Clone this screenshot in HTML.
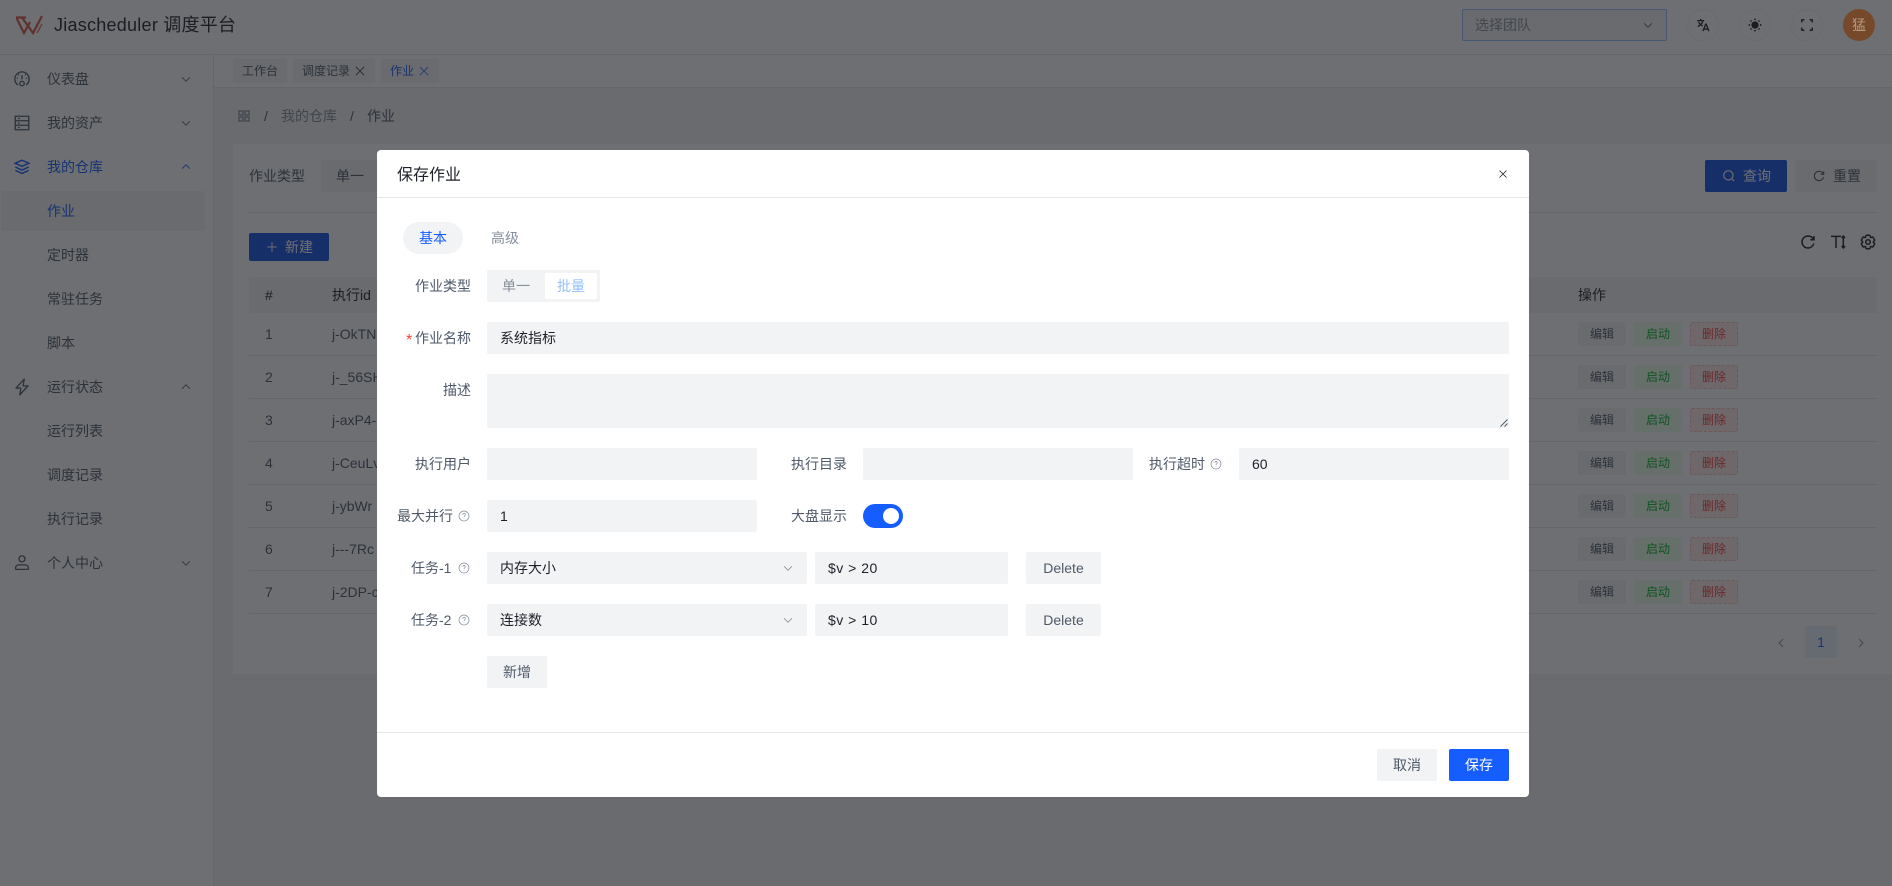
<!DOCTYPE html>
<html lang="zh"><head><meta charset="utf-8"><title>Jiascheduler</title>
<style>
*{box-sizing:border-box}
html,body{margin:0;padding:0;width:1892px;height:886px;overflow:hidden;background:#f2f3f5}
body{position:relative;font-family:"Liberation Sans","Noto Sans CJK SC",sans-serif;font-size:14px;color:#4e5969}
.a{position:absolute;white-space:nowrap}
.t{position:absolute;white-space:nowrap;line-height:20px;height:20px}
.f{position:absolute;background:#f2f3f5;border-radius:2px}
svg{position:absolute;fill:none;stroke:currentColor;stroke-width:4;overflow:visible}
.btn{position:absolute;text-align:center;border-radius:2px;white-space:nowrap}
.mi{position:absolute;left:47px;line-height:20px;height:20px;color:#4e5969}
.rl{position:absolute;left:249px;width:1628px;height:1px;background:#e5e6eb}
.lab{position:absolute;line-height:20px;height:20px;color:#4e5969;white-space:nowrap;text-align:right}
.val{position:absolute;line-height:20px;height:20px;color:#1d2129;white-space:nowrap}
.ed{background:#f2f3f5;font-size:12px;line-height:24px;width:48px;height:24px}
.st{background:#e8ffea;color:#00b42a;font-size:12px;line-height:24px;width:48px;height:24px}
.de{background:#ffece8;color:#f53f3f;font-size:12px;line-height:22px;width:48px;height:24px;border:1px dashed #f8c5bf}
</style></head><body>
<!-- header -->
<div class="a" style="left:0;top:0;width:1892px;height:55px;background:#fff;border-bottom:1px solid #e5e6eb"></div>
<svg style="left:16px;top:16px;width:27px;height:19px;color:#d9584a;stroke-width:2.2" viewBox="0 0 27 19"><path d="M0.5 2 8 17 14 6M0 1.500H10M6 1.500 17 17 26 0"/><path d="M21 17 26 8" stroke-width="1.2"/></svg>
<div class="a" style="left:54px;top:12px;font-size:18px;line-height:26px;color:#1d2129;letter-spacing:.25px">Jiascheduler 调度平台</div>
<div class="a" style="left:1462px;top:9px;width:205px;height:32px;background:#f2f3f5;border:1px solid #94bfff;border-radius:2px"></div>
<div class="t" style="left:1475px;top:15px;color:#86909c">选择团队</div>
<svg style="left:1642px;top:19px;width:12px;height:12px;color:#4e5969;stroke-width:3.5" viewBox="0 0 48 48"><path d="M39.6 17.443 24.043 33 8.487 17.443"/></svg>
<div class="a" style="left:1687px;top:9px;width:32px;height:32px;border-radius:50%;border:1px solid #f2f3f5"></div>
<div class="a" style="left:1739px;top:9px;width:32px;height:32px;border-radius:50%;border:1px solid #f2f3f5"></div>
<div class="a" style="left:1791px;top:9px;width:32px;height:32px;border-radius:50%;border:1px solid #f2f3f5"></div>
<svg style="left:1696px;top:18px;width:14px;height:14px;color:#1d2129;stroke-width:4.5" viewBox="0 0 48 48"><path d="M4 9h24M16 3v6M24 9c-2 9-8 16-18 20M9 13c2 6 7 11 14 14M24 45l9-24h2l9 24M27 38h14"/></svg>
<svg style="left:1747px;top:17px;width:16px;height:16px;color:#1d2129" viewBox="0 0 48 48"><circle cx="24" cy="24" r="9" fill="currentColor"/><path d="M24 5v4M24 39v4M5 24h4M39 24h4M10.6 10.6l2.8 2.8M34.6 34.6l2.8 2.8M10.6 37.4l2.8-2.8M34.6 13.4l2.8-2.8" stroke-width="5"/></svg>
<svg style="left:1800px;top:18px;width:14px;height:14px;color:#1d2129" viewBox="0 0 48 48"><path d="M42 15V7a1 1 0 0 0-1-1h-8M6 15V7a1 1 0 0 1 1-1h8m27 27v8a1 1 0 0 1-1 1h-8M6 33v8a1 1 0 0 0 1 1h8" stroke-width="5"/></svg>

<!-- sidebar -->
<div class="a" style="left:0;top:55px;width:214px;height:831px;background:#fff;border-right:1px solid #e5e6eb"></div>
<div class="f" style="left:1px;top:191px;width:204px;height:40px"></div>
<svg style="left:13px;top:70px;width:18px;height:18px;stroke-width:3.5" viewBox="0 0 48 48"><path d="M13 40C8 36.500 5 30.600 5 24 5 13.500 13.500 5 24 5s19 8.500 19 19c0 6.600-3 12.500-8 16M24 25V14M10 22h3M35 22h3M14 12l2 2M34 12l-2 2"/><circle cx="24" cy="36" r="6"/></svg>
<svg style="left:13px;top:114px;width:18px;height:18px;stroke-width:3.5" viewBox="0 0 48 48"><path d="M6 6h36v36H6zM6 18h36M6 30h36M13 12h5M13 24h5M13 36h5"/></svg>
<svg style="left:13px;top:158px;width:18px;height:18px;color:#165dff" viewBox="0 0 48 48"><path d="M24 6 42 14 24 22 6 14zM42 24 24 32 6 24M42 33 24 41 6 33"/></svg>
<svg style="left:13px;top:378px;width:18px;height:18px;stroke-width:3.5" viewBox="0 0 48 48"><path d="M30 3 8 27h13l-3 18 22-24H27z" stroke-linejoin="round"/></svg>
<svg style="left:13px;top:554px;width:18px;height:18px;stroke-width:3.5" viewBox="0 0 48 48"><circle cx="24" cy="13" r="8"/><path d="M7 37c0-5 4-8 9-8h16c5 0 9 3 9 8v3a1 1 0 0 1-1 1H8a1 1 0 0 1-1-1z"/></svg>
<div class="mi" style="top:69px">仪表盘</div>
<div class="mi" style="top:113px">我的资产</div>
<div class="mi" style="top:157px;color:#165dff">我的仓库</div>
<div class="mi" style="top:201px;color:#165dff">作业</div>
<div class="mi" style="top:245px">定时器</div>
<div class="mi" style="top:289px">常驻任务</div>
<div class="mi" style="top:333px">脚本</div>
<div class="mi" style="top:377px">运行状态</div>
<div class="mi" style="top:421px">运行列表</div>
<div class="mi" style="top:465px">调度记录</div>
<div class="mi" style="top:509px">执行记录</div>
<div class="mi" style="top:553px">个人中心</div>
<svg style="left:180px;top:73px;width:12px;height:12px;color:#4e5969;stroke-width:3.5" viewBox="0 0 48 48"><path d="M39.6 17.443 24.043 33 8.487 17.443"/></svg>
<svg style="left:180px;top:117px;width:12px;height:12px;color:#4e5969;stroke-width:3.5" viewBox="0 0 48 48"><path d="M39.6 17.443 24.043 33 8.487 17.443"/></svg>
<svg style="left:180px;top:161px;width:12px;height:12px;color:#165dff;stroke-width:3.5" viewBox="0 0 48 48"><path d="M39.6 30.557 24.043 15 8.487 30.557"/></svg>
<svg style="left:180px;top:381px;width:12px;height:12px;color:#4e5969;stroke-width:3.5" viewBox="0 0 48 48"><path d="M39.6 30.557 24.043 15 8.487 30.557"/></svg>
<svg style="left:180px;top:557px;width:12px;height:12px;color:#4e5969;stroke-width:3.5" viewBox="0 0 48 48"><path d="M39.6 17.443 24.043 33 8.487 17.443"/></svg>

<!-- tabs -->
<div class="a" style="left:214px;top:55px;width:1678px;height:33px;background:#fff;border-bottom:1px solid #e5e6eb"></div>
<div class="f" style="left:233px;top:59px;width:54px;height:24px"></div>
<div class="f" style="left:293px;top:59px;width:82px;height:24px"></div>
<div class="f" style="left:381px;top:59px;width:58px;height:24px"></div>
<div class="a" style="left:242px;top:61px;font-size:12px;line-height:20px">工作台</div>
<div class="a" style="left:302px;top:61px;font-size:12px;line-height:20px">调度记录</div>
<div class="a" style="left:390px;top:61px;font-size:12px;line-height:20px;color:#165dff">作业</div>
<svg style="left:353px;top:64px;width:14px;height:14px;color:#1d2129;stroke-width:2.5" viewBox="0 0 48 48"><path d="M9.857 9.858 24 24m0 0 14.142 14.142M24 24 38.142 9.858M24 24 9.857 38.142"/></svg>
<svg style="left:417px;top:64px;width:14px;height:14px;color:#165dff;stroke-width:2.5" viewBox="0 0 48 48"><path d="M9.857 9.858 24 24m0 0 14.142 14.142M24 24 38.142 9.858M24 24 9.857 38.142"/></svg>

<!-- breadcrumb -->
<svg style="left:238px;top:110px;width:12px;height:12px;color:#86909c;stroke-width:5" viewBox="0 0 48 48"><path d="M4 4h16v16H4zM28 4h16v16H28zM4 28h16v16H4zM28 28h16v16H28z"/></svg>
<div class="t" style="left:264px;top:106px;color:#4e5969">/</div>
<div class="t" style="left:281px;top:106px;color:#86909c">我的仓库</div>
<div class="t" style="left:350px;top:106px;color:#4e5969">/</div>
<div class="t" style="left:367px;top:106px;color:#4e5969">作业</div>

<!-- card -->
<div class="a" style="left:233px;top:144px;width:1659px;height:530px;background:#fff"></div>
<div class="t" style="left:249px;top:166px">作业类型</div>
<div class="f" style="left:321px;top:160px;width:200px;height:32px"></div>
<div class="t" style="left:336px;top:166px">单一</div>
<div class="btn" style="left:1705px;top:160px;width:82px;height:32px;background:#1353e6;color:#fff;line-height:32px;padding-left:22px">查询</div>
<svg style="left:1722px;top:169px;width:14px;height:14px;color:#fff" viewBox="0 0 48 48"><path d="M33.072 33.071c6.248-6.248 6.248-16.379 0-22.627-6.249-6.249-16.38-6.249-22.628 0-6.248 6.248-6.248 16.379 0 22.627 6.248 6.248 16.38 6.248 22.628 0Zm0 0 8.485 8.485"/></svg>
<div class="btn" style="left:1795px;top:160px;width:82px;height:32px;background:#f2f3f5;color:#4e5969;line-height:32px;padding-left:22px">重置</div>
<svg style="left:1812px;top:169px;width:14px;height:14px;color:#4e5969" viewBox="0 0 48 48"><path d="M38.837 18C36.463 12.136 30.715 8 24 8 15.163 8 8 15.163 8 24s7.163 16 16 16c7.455 0 13.72-5.100 15.496-12M40 8v10H30"/></svg>
<div class="rl" style="top:212px"></div>
<div class="btn" style="left:249px;top:233px;width:80px;height:28px;background:#1353e6;color:#fff;line-height:28px;padding-left:20px">新建</div>
<svg style="left:266px;top:241px;width:12px;height:12px;color:#fff" viewBox="0 0 48 48"><path d="M5 24h38M24 5v38"/></svg>
<svg style="left:1799px;top:233px;width:18px;height:18px;color:#1d2129" viewBox="0 0 48 48"><path d="M38.837 18C36.463 12.136 30.715 8 24 8 15.163 8 8 15.163 8 24s7.163 16 16 16c7.455 0 13.72-5.100 15.496-12M40 8v10H30"/></svg>
<svg style="left:1830px;top:234px;width:16px;height:16px;color:#1d2129;stroke-width:4.5" viewBox="0 0 48 48"><path d="M3 7h30M18 7v35M40 6v36M35 12l5-6 5 6M35 36l5 6 5-6"/></svg>
<svg style="left:1859px;top:233px;width:18px;height:18px;color:#1d2129" viewBox="0 0 48 48"><path d="M18.797 6.732A1 1 0 0 1 19.76 6h8.48a1 1 0 0 1 .964.732l1.285 4.628a1 1 0 0 0 1.213.7l4.651-1.2a1 1 0 0 1 1.116.468l4.24 7.344a1 1 0 0 1-.153 1.2L38.193 23.3a1 1 0 0 0 0 1.402l3.364 3.427a1 1 0 0 1 .153 1.2l-4.24 7.344a1 1 0 0 1-1.116.468l-4.65-1.2a1 1 0 0 0-1.214.7l-1.285 4.628a1 1 0 0 1-.964.732h-8.48a1 1 0 0 1-.963-.732L17.51 36.64a1 1 0 0 0-1.213-.7l-4.65 1.2a1 1 0 0 1-1.116-.468l-4.24-7.344a1 1 0 0 1 .153-1.2L9.809 24.7a1 1 0 0 0 0-1.402l-3.364-3.427a1 1 0 0 1-.153-1.2l4.24-7.344a1 1 0 0 1 1.116-.468l4.65 1.2a1 1 0 0 0 1.213-.7l1.286-4.628Z"/><path d="M30 24a6 6 0 1 1-12 0 6 6 0 0 1 12 0Z"/></svg>
<div class="f" style="left:249px;top:277px;width:1628px;height:36px;border-radius:0"></div>
<div class="t" style="left:265px;top:285px;color:#1d2129">#</div>
<div class="t" style="left:332px;top:285px;color:#1d2129">执行id</div>
<div class="t" style="left:1578px;top:285px;color:#1d2129">操作</div>

<div class="rl" style="top:355px"></div><div class="rl" style="top:398px"></div><div class="rl" style="top:441px"></div><div class="rl" style="top:484px"></div><div class="rl" style="top:527px"></div><div class="rl" style="top:570px"></div><div class="rl" style="top:613px"></div>

<div class="t" style="left:265px;top:324px">1</div><div class="t" style="left:332px;top:324px">j-OkTN</div>
<div class="t" style="left:265px;top:367px">2</div><div class="t" style="left:332px;top:367px">j-_56SH</div>
<div class="t" style="left:265px;top:410px">3</div><div class="t" style="left:332px;top:410px">j-axP4-</div>
<div class="t" style="left:265px;top:453px">4</div><div class="t" style="left:332px;top:453px">j-CeuLv</div>
<div class="t" style="left:265px;top:496px">5</div><div class="t" style="left:332px;top:496px">j-ybWr</div>
<div class="t" style="left:265px;top:539px">6</div><div class="t" style="left:332px;top:539px">j---7Rc</div>
<div class="t" style="left:265px;top:582px">7</div><div class="t" style="left:332px;top:582px">j-2DP-c</div>

<div class="btn ed" style="left:1578px;top:322px">编辑</div><div class="btn st" style="left:1634px;top:322px">启动</div><div class="btn de" style="left:1690px;top:322px">删除</div>
<div class="btn ed" style="left:1578px;top:365px">编辑</div><div class="btn st" style="left:1634px;top:365px">启动</div><div class="btn de" style="left:1690px;top:365px">删除</div>
<div class="btn ed" style="left:1578px;top:408px">编辑</div><div class="btn st" style="left:1634px;top:408px">启动</div><div class="btn de" style="left:1690px;top:408px">删除</div>
<div class="btn ed" style="left:1578px;top:451px">编辑</div><div class="btn st" style="left:1634px;top:451px">启动</div><div class="btn de" style="left:1690px;top:451px">删除</div>
<div class="btn ed" style="left:1578px;top:494px">编辑</div><div class="btn st" style="left:1634px;top:494px">启动</div><div class="btn de" style="left:1690px;top:494px">删除</div>
<div class="btn ed" style="left:1578px;top:537px">编辑</div><div class="btn st" style="left:1634px;top:537px">启动</div><div class="btn de" style="left:1690px;top:537px">删除</div>
<div class="btn ed" style="left:1578px;top:580px">编辑</div><div class="btn st" style="left:1634px;top:580px">启动</div><div class="btn de" style="left:1690px;top:580px">删除</div>

<div class="btn" style="left:1805px;top:626px;width:32px;height:32px;background:#e8f3ff;color:#165dff;line-height:32px">1</div>
<svg style="left:1775px;top:637px;width:12px;height:12px;color:#86909c" viewBox="0 0 48 48"><path d="M32 8.400 16.444 23.956 32 39.513"/></svg>
<svg style="left:1855px;top:637px;width:12px;height:12px;color:#86909c" viewBox="0 0 48 48"><path d="M16 39.513 31.556 23.956 16 8.400"/></svg>

<!-- mask -->
<div class="a" style="left:0;top:0;width:1892px;height:886px;background:rgba(25,27,32,.63)"></div>
<div class="a" style="left:1843px;top:9px;width:32px;height:32px;border-radius:50%;background:#75492a;color:#b89a84;text-align:center;line-height:32px;font-size:14px">猛</div>

<!-- modal -->
<div class="a" style="left:377px;top:150px;width:1152px;height:647px;background:#fff;border-radius:4px"></div>
<div class="a" style="left:377px;top:197px;width:1152px;height:1px;background:#e5e6eb"></div>
<div class="a" style="left:377px;top:732px;width:1152px;height:1px;background:#e5e6eb"></div>
<div class="a" style="left:397px;top:164px;font-size:16px;line-height:24px;color:#1d2129">保存作业</div>
<svg style="left:1499px;top:170px;width:8px;height:8px;color:#1d2129;stroke-width:5" viewBox="0 0 48 48"><path d="M3 3 45 45M45 3 3 45"/></svg>

<div class="a" style="left:403px;top:222px;width:60px;height:32px;border-radius:16px;background:#f2f3f5;color:#165dff;text-align:center;line-height:32px">基本</div>
<div class="t" style="left:491px;top:228px;color:#86909c">高级</div>

<div class="lab" style="left:415px;top:276px">作业类型</div>
<div class="f" style="left:487px;top:270px;width:113px;height:32px"></div>
<div class="t" style="left:502px;top:276px;color:#86909c">单一</div>
<div class="a" style="left:545px;top:273px;width:52px;height:26px;background:#fff;border-radius:2px;color:#94bfff;text-align:center;line-height:26px">批量</div>

<div class="a" style="left:406px;top:331px;line-height:20px;color:#f53f3f;font-size:16px">*</div>
<div class="lab" style="left:415px;top:328px">作业名称</div>
<div class="f" style="left:487px;top:322px;width:1022px;height:32px"></div>
<div class="val" style="left:500px;top:328px">系统指标</div>

<div class="lab" style="left:443px;top:380px">描述</div>
<div class="f" style="left:487px;top:374px;width:1022px;height:54px"></div>
<svg style="left:1500px;top:419px;width:8px;height:8px;color:#4e5969;stroke-width:1" viewBox="0 0 8 8"><path d="M7.500 0.500 0.500 7.500M7.500 4.500 4.500 7.500"/></svg>

<div class="lab" style="left:415px;top:454px">执行用户</div>
<div class="f" style="left:487px;top:448px;width:270px;height:32px"></div>
<div class="lab" style="left:791px;top:454px">执行目录</div>
<div class="f" style="left:863px;top:448px;width:270px;height:32px"></div>
<div class="lab" style="left:1149px;top:454px">执行超时</div>
<svg style="left:1210px;top:458px;width:12px;height:12px;color:#86909c;stroke-width:3" viewBox="0 0 48 48"><circle cx="24" cy="24" r="20"/><path d="M24 33v2M24 28c0-3 5-4.500 5-9 0-2.800-2.200-5-5-5s-5 2.200-5 5"/></svg>
<div class="f" style="left:1239px;top:448px;width:270px;height:32px"></div>
<div class="val" style="left:1252px;top:454px">60</div>

<div class="lab" style="left:397px;top:506px">最大并行</div>
<svg style="left:458px;top:510px;width:12px;height:12px;color:#86909c;stroke-width:3" viewBox="0 0 48 48"><circle cx="24" cy="24" r="20"/><path d="M24 33v2M24 28c0-3 5-4.500 5-9 0-2.800-2.200-5-5-5s-5 2.200-5 5"/></svg>
<div class="f" style="left:487px;top:500px;width:270px;height:32px"></div>
<div class="val" style="left:500px;top:506px">1</div>
<div class="lab" style="left:791px;top:506px">大盘显示</div>
<div class="a" style="left:863px;top:504px;width:40px;height:24px;border-radius:12px;background:#165dff"></div>
<div class="a" style="left:883px;top:508px;width:16px;height:16px;border-radius:50%;background:#fff"></div>

<div class="lab" style="left:411px;top:558px">任务-1</div>
<svg style="left:458px;top:562px;width:12px;height:12px;color:#86909c;stroke-width:3" viewBox="0 0 48 48"><circle cx="24" cy="24" r="20"/><path d="M24 33v2M24 28c0-3 5-4.500 5-9 0-2.800-2.200-5-5-5s-5 2.200-5 5"/></svg>
<div class="f" style="left:487px;top:552px;width:320px;height:32px"></div>
<div class="val" style="left:500px;top:558px">内存大小</div>
<svg style="left:782px;top:562px;width:12px;height:12px;color:#86909c;stroke-width:3.5" viewBox="0 0 48 48"><path d="M39.6 17.443 24.043 33 8.487 17.443"/></svg>
<div class="f" style="left:815px;top:552px;width:193px;height:32px"></div>
<div class="val" style="left:828px;top:558px;letter-spacing:.5px">$v &gt; 20</div>
<div class="btn" style="left:1026px;top:552px;width:75px;height:32px;background:#f2f3f5;line-height:32px">Delete</div>

<div class="lab" style="left:411px;top:610px">任务-2</div>
<svg style="left:458px;top:614px;width:12px;height:12px;color:#86909c;stroke-width:3" viewBox="0 0 48 48"><circle cx="24" cy="24" r="20"/><path d="M24 33v2M24 28c0-3 5-4.500 5-9 0-2.800-2.200-5-5-5s-5 2.200-5 5"/></svg>
<div class="f" style="left:487px;top:604px;width:320px;height:32px"></div>
<div class="val" style="left:500px;top:610px">连接数</div>
<svg style="left:782px;top:614px;width:12px;height:12px;color:#86909c;stroke-width:3.5" viewBox="0 0 48 48"><path d="M39.6 17.443 24.043 33 8.487 17.443"/></svg>
<div class="f" style="left:815px;top:604px;width:193px;height:32px"></div>
<div class="val" style="left:828px;top:610px;letter-spacing:.5px">$v &gt; 10</div>
<div class="btn" style="left:1026px;top:604px;width:75px;height:32px;background:#f2f3f5;line-height:32px">Delete</div>

<div class="btn" style="left:487px;top:656px;width:60px;height:32px;background:#f2f3f5;line-height:32px">新增</div>
<div class="btn" style="left:1377px;top:749px;width:60px;height:32px;background:#f2f3f5;line-height:32px">取消</div>
<div class="btn" style="left:1449px;top:749px;width:60px;height:32px;background:#165dff;color:#fff;line-height:32px">保存</div>
</body></html>
